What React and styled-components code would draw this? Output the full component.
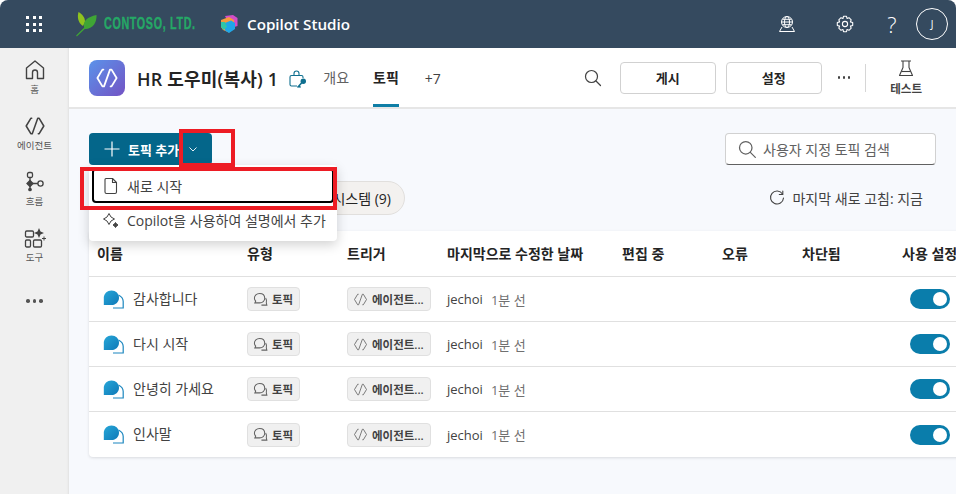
import React from 'react'
import styled, { createGlobalStyle } from 'styled-components'

const GlobalStyle = createGlobalStyle`
  html, body { margin: 0; padding: 0; height: 100%; overflow: hidden; background: #fff; }
  body { font-family: "Open Sans", "Noto Sans CJK KR", sans-serif; color: #242424; }
  * { box-sizing: border-box; }
`

const KR = `"Open Sans", "Noto Sans CJK KR", sans-serif`

const topics = ['감사합니다', '다시 시작', '안녕히 가세요', '인사말']

const columns = [
  { label: '이름', width: 150 },
  { label: '유형', width: 100 },
  { label: '트리거', width: 100 },
  { label: '마지막으로 수정한 날짜', width: 175 },
  { label: '편집 중', width: 100 },
  { label: '오류', width: 80 },
  { label: '차단됨', width: 100 },
  { label: '사용 설정', width: 70 },
]

const AgentGlyph = ({ size = 20, color = 'currentColor', width = 1.5 }) => (
  <svg width={size} height={size} viewBox="0 0 20 20" fill="none" stroke={color} strokeWidth={width} strokeLinejoin="round" strokeLinecap="round">
    <path d="M7 3 H6.2 L2 10 L6.2 17 H7.5 L12.5 3 H13.8 L18 10 L13.8 17 H13" />
  </svg>
)

const TopicIcon = () => (
  <svg width="21" height="19" viewBox="0 0 21 19">
    <defs>
      <linearGradient id="bubble" x1="0" y1="0" x2="1" y2="1">
        <stop offset="0" stopColor="#27a7d8" />
        <stop offset="1" stopColor="#0f79b8" />
      </linearGradient>
    </defs>
    <path d="M15.5 5 C18.5 6.5 20.2 8.5 20.2 11.5 V18 H10" fill="none" stroke="#1b86bf" strokeWidth="1.2" />
    <path d="M8.5 0.5 C12.8 0.5 16 3.7 16 7.7 C16 11.8 12.8 15 8.5 15 H0.8 V7.7 C0.8 3.7 4.200 0.5 8.5 0.5 Z" fill="url(#bubble)" />
  </svg>
)

const ChatGlyph = () => (
  <svg width="15" height="15" viewBox="0 0 16 16" fill="none" stroke="#616161" strokeWidth="1.1">
    <path d="M7 1.5 C10.3 1.5 12.5 3.7 12.5 6.6 C12.5 9.5 10.2 11.6 7 11.6 L2 11.6 L2.9 9.7 C2 8.8 1.5 7.8 1.5 6.6 C1.5 3.7 3.8 1.5 7 1.5 Z" />
    <path d="M13.5 6.5 C14.5 8 14.6 10 14.2 11.5 L14.8 14 L9 14" />
  </svg>
)

const App = () => (
  <Page>
    <GlobalStyle />
    <TopBar>
      <Waffle>
        {Array.from({ length: 9 }).map((_, i) => <i key={i} />)}
      </Waffle>
      <Logo>
        <svg width="22" height="26" viewBox="0 0 22 26">
          <path d="M7 15 C2 12 1 6 2.5 1 C6 3 9 6 9 11 Z" fill="#8fc31f" />
          <path d="M8 16 C7 10 11 6 20.5 4 C21 11 17 18 9 18 Z" fill="#3fa535" />
          <path d="M0.5 25 C5 21 10 16 15 10" fill="none" stroke="#3fa535" strokeWidth="1.2" />
        </svg>
        <LogoText>CONTOSO, LTD.</LogoText>
      </Logo>
      <StudioMark>
        <svg width="18" height="20" viewBox="0 0 18 20">
          <path d="M5 2 L13 1 L17.5 4 L17.5 12 L11 14 Z" fill="#d24ec7" />
          <path d="M1 6 L9 3 L14 6 L14 15 L9 18.5 L3 16 L1 13 Z" fill="#f59a3c" />
          <path d="M5 9 L11 6.5 L15 9 L15 15 L9 19 L5 16.5 Z" fill="#1fa7e8" />
          <path d="M1 8 L5 8 L7 13 L3.5 16 L1 13 Z" fill="#2fc6a8" />
        </svg>
        <StudioName>Copilot Studio</StudioName>
      </StudioMark>
      <TopActions>
        <TopIconSlot>
          <svg width="18" height="18" viewBox="0 0 18 18" fill="none" stroke="#fff" strokeWidth="1">
            <circle cx="9" cy="7" r="5.5" />
            <ellipse cx="9" cy="7" rx="2.5" ry="5.5" />
            <path d="M3.5 7 H14.5 M4.5 4.3 H13.5 M4.5 9.7 H13.5" />
            <path d="M4 12 L1.5 16.5 H16.5 L14 12" />
          </svg>
        </TopIconSlot>
        <TopIconSlot>
          <svg width="18" height="18" viewBox="0 0 18 18" fill="none" stroke="#fff" strokeWidth="1.1" strokeLinejoin="round">
            <circle cx="9" cy="9" r="2.6" />
            <path d="M7.5 1.3 H10.5 L11 3.5 L13 2.7 L15.2 4.8 L14.4 6.9 L16.7 7.5 V10.5 L14.4 11.1 L15.2 13.2 L13 15.3 L11 14.5 L10.5 16.7 H7.5 L7 14.5 L5 15.3 L2.8 13.2 L3.6 11.1 L1.3 10.5 V7.5 L3.6 6.9 L2.8 4.8 L5 2.7 L7 3.5 Z" />
          </svg>
        </TopIconSlot>
        <HelpMark>?</HelpMark>
        <Avatar>J</Avatar>
      </TopActions>
    </TopBar>

    <Body>
      <Rail>
        <RailItem>
          <svg width="22" height="22" viewBox="0 0 22 22" fill="none" stroke="#424242" strokeWidth="1.4" strokeLinejoin="round">
            <path d="M2.5 9 L11 2 L19.5 9 V19.5 H13.5 V13.5 C13.5 12 12.5 11 11 11 C9.5 11 8.5 12 8.5 13.5 V19.5 H2.5 Z" />
          </svg>
          <RailLabel>홈</RailLabel>
        </RailItem>
        <RailItem>
          <AgentGlyph size={22} color="#424242" width={1.4} />
          <RailLabel>에이전트</RailLabel>
        </RailItem>
        <RailItem>
          <svg width="22" height="22" viewBox="0 0 22 22" fill="none" stroke="#424242" strokeWidth="1.3">
            <rect x="3.5" y="1.5" width="5" height="5" rx="1.5" />
            <path d="M6 6.5 V11 M6 14 V18 M9 12.5 H14" />
            <path d="M6 9.5 L9 12.5 L6 15.5 L3 12.5 Z" fill="#424242" />
            <circle cx="16.5" cy="12.5" r="2.6" />
            <circle cx="6" cy="18.5" r="1.2" fill="#424242" />
          </svg>
          <RailLabel>흐름</RailLabel>
        </RailItem>
        <RailItem>
          <svg width="22" height="22" viewBox="0 0 22 22" fill="none" stroke="#424242" strokeWidth="1.3">
            <rect x="1.5" y="4" width="8" height="6" rx="1.2" />
            <rect x="1.5" y="13" width="5" height="7" rx="1.2" />
            <rect x="9.5" y="13" width="8" height="7" rx="1.2" />
            <path d="M15 1 L16.5 4.5 L20 6 L16.5 7.5 L15 11 L13.5 7.5 L10 6 L13.5 4.5 Z" fill="#424242" stroke="none" />
            <path d="M20 9.5 V13.5 M18 11.5 H22" strokeWidth="1" />
          </svg>
          <RailLabel>도구</RailLabel>
        </RailItem>
        <RailDots>
          <i /><i /><i />
        </RailDots>
      </Rail>

      <Main>
        <AgentHeader>
          <AgentTile><AgentGlyph size={24} color="#fff" width={1.5} /></AgentTile>
          <AgentName>HR 도우미(복사) 1</AgentName>
          <LockKey>
            <svg width="18" height="19" viewBox="0 0 18 19" fill="none" stroke="#0f6f8f" strokeWidth="1.1">
              <path d="M5 5.500 V3.500 C5 2 6 1 7.500 1 C9 1 10 2 10 3.500 V5.500" />
              <path d="M8 16 H2.500 C1.500 16 1 15.500 1 14.500 V7 C1 6 1.500 5.500 2.500 5.500 H12.500 C13.500 5.500 14 6 14 7 V8" />
              <circle cx="14.300" cy="11.300" r="2.700" fill="#0f6f8f" stroke="none" />
              <path d="M13 12.500 L8.500 17.500 M10 16 L11.500 17.500" strokeWidth="1.6" />
            </svg>
          </LockKey>
          <Tab>개요</Tab>
          <Tab $active>토픽</Tab>
          <OverflowTab>+7</OverflowTab>
          <HeaderActions>
            <SearchGlyph>
              <svg width="18" height="18" viewBox="0 0 18 18" fill="none" stroke="#424242" strokeWidth="1.2" strokeLinecap="round">
                <circle cx="7.5" cy="7.5" r="6" />
                <path d="M12 12 L16.5 16.5" />
              </svg>
            </SearchGlyph>
            <OutlineButton>게시</OutlineButton>
            <OutlineButton>설정</OutlineButton>
            <MoreDots><i /><i /><i /></MoreDots>
            <HeaderDivider />
            <TestAction>
              <svg width="16" height="17" viewBox="0 0 16 17" fill="none" stroke="#424242" strokeWidth="1.1" strokeLinejoin="round">
                <path d="M3 1 H13 M5 1 V7.5 L1.5 15.5 H14.5 L11 7.5 V1" />
                <path d="M3.5 11.5 H12.5" />
              </svg>
              <TestLabel>테스트</TestLabel>
            </TestAction>
          </HeaderActions>
        </AgentHeader>

        <Content>
          <ToolRow>
            <AddButton>
              <svg width="16" height="16" viewBox="0 0 16 16" stroke="#fff" strokeWidth="1.2">
                <path d="M8 0.5 V15.5 M0.5 8 H15.5" />
              </svg>
              <AddLabel>토픽 추가</AddLabel>
              <svg width="10" height="10" viewBox="0 0 10 10" fill="none" stroke="#fff" strokeWidth="0.9">
                <path d="M1.5 3.5 L5 7 L8.5 3.5" />
              </svg>
            </AddButton>
            <SearchBox>
              <svg width="24" height="24" viewBox="0 0 24 24" fill="none" stroke="#616161" strokeWidth="1.5" strokeLinecap="round">
                <circle cx="10.5" cy="10.5" r="7.5" />
                <path d="M16 16 L22 22" />
              </svg>
              <SearchHint>사용자 지정 토픽 검색</SearchHint>
            </SearchBox>
          </ToolRow>

          <FilterRow>
            <SystemPill>시스템 (9)</SystemPill>
            <RefreshNote>
              <svg width="16" height="16" viewBox="0 0 16 16" fill="none" stroke="#424242" strokeWidth="1.1" strokeLinecap="round">
                <path d="M13.5 4 A6.5 6.5 0 1 0 14.5 8" />
                <path d="M13.8 1 V4.5 H10.3" />
              </svg>
              마지막 새로 고침: 지금
            </RefreshNote>
          </FilterRow>

          <TopicTable>
            <HeadRow>
              {columns.map((c) => (
                <HeadCell key={c.label} $width={c.width}>{c.label}</HeadCell>
              ))}
            </HeadRow>
            {topics.map((name) => (
              <Row key={name}>
                <NameCell>
                  <TopicIcon />
                  <span>{name}</span>
                </NameCell>
                <Cell $width={100}>
                  <Tag><ChatGlyph />토픽</Tag>
                </Cell>
                <Cell $width={100}>
                  <Tag><AgentGlyph size={15} color="#616161" width={1.1} />에이전트...</Tag>
                </Cell>
                <Cell $width={355}>
                  jechoi<Ago>1분 선</Ago>
                </Cell>
                <Cell $width={100} />
                <Cell $width={70}>
                  <Toggle />
                </Cell>
              </Row>
            ))}
          </TopicTable>

          <Menu>
            <MenuItem $focused>
              <svg width="16" height="18" viewBox="0 0 16 18" fill="none" stroke="#424242" strokeWidth="1.1" strokeLinejoin="round">
                <path d="M3 1.5 H9.5 L13.5 5.5 V15 C13.5 16 13 16.5 12 16.5 H3.5 C2.5 16.5 2 16 2 15 V2.5 C2 2 2.5 1.5 3 1.5 Z" />
                <path d="M9.5 1.5 V5.5 H13.5" />
              </svg>
              새로 시작
            </MenuItem>
            <MenuItem>
              <svg width="16" height="16" viewBox="0 0 16 16" fill="none" stroke="#424242" strokeWidth="1" strokeLinejoin="round">
                <path d="M6 1.5 L8 5 L11.5 7 L8 9 L6 12.5 L4 9 L0.5 7 L4 5 Z" />
                <path d="M12.5 10.5 L13.5 12 L15 13 L13.5 14 L12.5 15.5 L11.5 14 L10 13 L11.5 12 Z" fill="#424242" />
              </svg>
              Copilot을 사용하여 설명에서 추가
            </MenuItem>
          </Menu>
          <CaretMark />
          <ItemMark />
        </Content>
      </Main>
    </Body>
  </Page>
)

export default App

// 상단 바
const Page = styled.div`
  width: 956px;
  height: 494px;
  display: flex;
  flex-direction: column;
  overflow: hidden;
  font-family: ${KR};
`

const TopBar = styled.header`
  height: 48px;
  flex: none;
  display: flex;
  align-items: center;
  background: #354a5f;
  border-radius: 8px 8px 0 0;
  color: #fff;
`

const Waffle = styled.div`
  width: 16px;
  margin-left: 26px;
  display: grid;
  grid-template-columns: repeat(3, 3px);
  justify-content: space-between;
  row-gap: 3.5px;
  i { width: 3px; height: 3px; background: #fff; }
`

const Logo = styled.div`
  margin-left: 34px;
  display: flex;
  align-items: center;
  gap: 6px;
`

const LogoText = styled.span`
  width: 91px;
  font-family: "Liberation Sans", sans-serif;
  font-weight: 700;
  font-size: 16px;
  letter-spacing: 1px;
  color: #25a866;
  -webkit-text-stroke: 0.4px #25a866;
  transform: scaleX(0.67);
  transform-origin: left center;
  white-space: nowrap;
`

const StudioMark = styled.div`
  margin-left: 25px;
  display: flex;
  align-items: center;
  gap: 9px;
`

const StudioName = styled.span`
  font-size: 15.2px;
  font-weight: 600;
  color: #fff;
`

const TopActions = styled.div`
  margin-left: auto;
  display: flex;
  align-items: center;
  padding-right: 8px;
`

const TopIconSlot = styled.div`
  width: 58px;
  display: flex;
  justify-content: center;
`

const HelpMark = styled.span`
  width: 36px;
  margin-right: 6px;
  text-align: center;
  font-size: 22px;
  line-height: 24px;
  font-family: "Open Sans", sans-serif;
  font-weight: 300;
`

const Avatar = styled.div`
  width: 32px;
  height: 32px;
  border-radius: 50%;
  border: 1px solid #fff;
  display: flex;
  align-items: center;
  justify-content: center;
  font-size: 10px;
`

const Body = styled.div`
  flex: 1;
  display: flex;
  min-height: 0;
`

// 왼쪽 메뉴
const Rail = styled.nav`
  width: 69px;
  flex: none;
  background: #f0f0f0;
  display: flex;
  flex-direction: column;
  align-items: center;
  padding-top: 11px;
  box-shadow: inset -3px 0 3px -3px rgba(0, 0, 0, 0.12);
`

const RailItem = styled.div`
  height: 56px;
  display: flex;
  flex-direction: column;
  align-items: center;
  gap: 3px;
  color: #424242;
`

const RailLabel = styled.span`
  font-size: 9.5px;
  line-height: 11px;
  color: #555;
`

const RailDots = styled.div`
  margin-top: 16px;
  display: flex;
  gap: 3px;
  i { width: 3.5px; height: 3.5px; border-radius: 50%; background: #555; }
`

const Main = styled.main`
  flex: 1;
  min-width: 0;
  display: flex;
  flex-direction: column;
`

// 에이전트 헤더
const AgentHeader = styled.div`
  height: 61px;
  flex: none;
  display: flex;
  align-items: center;
  padding-left: 20px;
  background: #fff;
  border-bottom: 2px solid #e6e6e6;
`

const AgentTile = styled.div`
  width: 36px;
  height: 36px;
  border-radius: 8px;
  background: linear-gradient(135deg, #5b93ea 0%, #7353c4 100%);
  display: flex;
  align-items: center;
  justify-content: center;
`

const AgentName = styled.h1`
  margin: 0 0 0 12px;
  font-size: 18px;
  font-weight: 600;
  letter-spacing: 0.2px;
  color: #242424;
  white-space: nowrap;
`

const LockKey = styled.div`
  margin-left: 11px;
  margin-top: 4px;
  display: flex;
`

const Tab = styled.div`
  height: 100%;
  margin-left: ${(p) => (p.$active ? '24px' : '16px')};
  margin-right: ${(p) => (p.$active ? '9px' : '0')};
  display: flex;
  align-items: center;
  font-size: 14px;
  padding-bottom: 2px;
  font-weight: ${(p) => (p.$active ? 700 : 400)};
  color: ${(p) => (p.$active ? '#242424' : '#616161')};
  box-shadow: ${(p) => (p.$active ? 'inset 0 -3px 0 #0f7ea6' : 'none')};
`

const OverflowTab = styled(Tab)`
  padding: 2px 0 0;
  margin-left: 17px;
  color: #424242;
`

const HeaderActions = styled.div`
  margin-left: auto;
  display: flex;
  align-items: center;
  padding-right: 34px;
`

const SearchGlyph = styled.div`
  display: flex;
  margin-right: 18px;
`

const OutlineButton = styled.button`
  width: 96px;
  height: 32px;
  margin-right: 10px;
  border: 1px solid #d1d1d1;
  border-radius: 4px;
  background: #fff;
  font-family: ${KR};
  font-size: 13px;
  font-weight: 700;
  color: #242424;
`

const MoreDots = styled.div`
  margin-left: 6px;
  display: flex;
  gap: 2.5px;
  i { width: 2.5px; height: 2.5px; background: #424242; border-radius: 50%; }
`

const HeaderDivider = styled.div`
  width: 1px;
  height: 28px;
  margin-left: 15px;
  background: #d6d6d6;
`

const TestAction = styled.div`
  margin-left: 24px;
  display: flex;
  flex-direction: column;
  align-items: center;
  gap: 5px;
`

const TestLabel = styled.span`
  font-size: 11.5px;
  font-weight: 600;
  line-height: 14px;
  color: #424242;
`

// 본문
const Content = styled.div`
  position: relative;
  flex: 1;
  min-height: 0;
  background: #f7f9fd;
  padding: 24px 0 0 20px;
`

const ToolRow = styled.div`
  display: flex;
  justify-content: space-between;
  align-items: flex-start;
  padding-right: 20px;
`

const AddButton = styled.button`
  width: 123px;
  height: 32px;
  border: none;
  border-radius: 4px;
  background: #04668a;
  display: flex;
  align-items: center;
  padding: 0 0 0 15px;
  font-family: ${KR};
`

const AddLabel = styled.span`
  margin-left: 8px;
  margin-right: 9px;
  font-size: 13px;
  font-weight: 700;
  color: #fff;
  white-space: nowrap;
`

const SearchBox = styled.div`
  width: 211px;
  height: 32px;
  background: #fff;
  border: 1px solid #d1d1d1;
  border-bottom-color: #616161;
  border-radius: 4px;
  display: flex;
  align-items: center;
  gap: 6px;
  padding-left: 11px;
  svg { width: 20px; height: 20px; }
`

const SearchHint = styled.span`
  font-size: 14px;
  color: #616161;
`

const FilterRow = styled.div`
  height: 50px;
  margin-top: 16px;
  padding-right: 33px;
  display: flex;
  justify-content: space-between;
  align-items: flex-start;
`

const SystemPill = styled.div`
  width: 145px;
  height: 34px;
  margin-left: 171px;
  padding-right: 13px;
  border-radius: 17px;
  background: #f3f1ef;
  border: 1px solid #e1dfdd;
  display: flex;
  align-items: center;
  justify-content: flex-end;
  font-size: 14px;
  color: #242424;
`

const RefreshNote = styled.div`
  margin-top: 7px;
  display: flex;
  align-items: center;
  gap: 7px;
  font-size: 14px;
  color: #424242;
`

const TopicTable = styled.div`
  background: #fff;
  border-radius: 4px 0 0 4px;
  box-shadow: 0 1px 3px rgba(0, 0, 0, 0.12);
  width: 880px;
  font-size: 14px;
`

const HeadRow = styled.div`
  height: 46px;
  display: flex;
  align-items: center;
  padding: 0 0 2px 8px;
  border-bottom: 1px solid #e0e0e0;
`

const HeadCell = styled.div`
  width: ${(p) => p.$width}px;
  flex: none;
  font-size: 14px;
  font-weight: 700;
  white-space: nowrap;
  color: #242424;
`

const Row = styled.div`
  height: 45px;
  display: flex;
  align-items: center;
  padding-left: 8px;
  border-bottom: 1px solid #e0e0e0;
  &:last-child { border-bottom: none; }
`

const Cell = styled.div`
  width: ${(p) => p.$width}px;
  flex: none;
  display: flex;
  align-items: center;
  font-size: 13px;
  color: #424242;
  white-space: nowrap;
`

const NameCell = styled(Cell)`
  width: 150px;
  padding-left: 6px;
  gap: 9px;
  font-size: 14px;
  color: #424242;
  span { margin-top: -3px; }
`

const Ago = styled.span`
  margin-left: 8px;
  color: #707070;
`

const Tag = styled.div`
  height: 24px;
  padding: 0 6px 0 5px;
  display: flex;
  align-items: center;
  gap: 4px;
  background: #f0f0f0;
  border: 1px solid #e0e0e0;
  border-radius: 4px;
  font-size: 11.5px;
  font-weight: 600;
  color: #424242;
`

const Toggle = styled.div`
  width: 40px;
  height: 20px;
  margin-left: 8px;
  border-radius: 10px;
  background: #0a7dab;
  position: relative;
  &::after {
    content: '';
    position: absolute;
    right: 3px;
    top: 3px;
    width: 14px;
    height: 14px;
    border-radius: 50%;
    background: #fff;
  }
`

// 드롭다운 메뉴
const Menu = styled.div`
  position: absolute;
  left: 20px;
  top: 56px;
  width: 248px;
  height: 76px;
  padding-top: 3px;
  background: #fff;
  border-radius: 4px;
  box-shadow: 0 4px 12px rgba(0, 0, 0, 0.18);
`

const MenuItem = styled.div`
  height: ${(p) => (p.$focused ? '35px' : '33px')};
  display: flex;
  align-items: center;
  gap: 8px;
  padding-left: 14px;
  font-size: 14px;
  color: #424242;
  white-space: nowrap;
  ${(p) => p.$focused && `
    border-radius: 4px;
    box-shadow: inset 0 0 0 2px #000;
    margin: 0 3px;
    padding-left: 11px;
  `}
`

const CaretMark = styled.div`
  position: absolute;
  left: 110px;
  top: 20px;
  width: 56px;
  height: 38px;
  border: 4px solid #ed1c24;
  pointer-events: none;
`

const ItemMark = styled.div`
  position: absolute;
  left: 11px;
  top: 58px;
  width: 257px;
  height: 43px;
  border: 4px solid #ed1c24;
  pointer-events: none;
`
